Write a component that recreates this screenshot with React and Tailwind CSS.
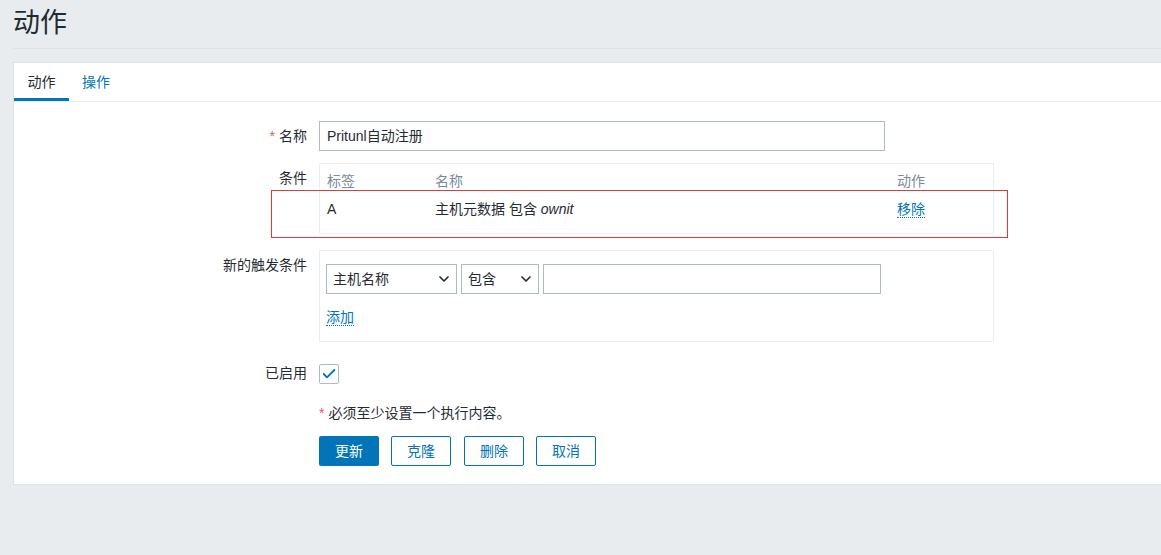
import { ChevronDown, Check } from 'lucide-react'

const font = { fontFamily: '"Liberation Sans", Arial, "Noto Sans CJK SC", sans-serif' }

function Row({ label, required, children, className = '', labelClass = 'pt-[5px]' }) {
  return (
    <div className={`grid grid-cols-[293px_1fr] gap-x-3 ${className}`}>
      <div className={`text-right text-[14px] text-[#1f2c33] ${labelClass}`}>
        {required && <span className="text-[#e45959] mr-1">*</span>}
        {label}
      </div>
      <div>{children}</div>
    </div>
  )
}

function Select({ value, width }) {
  return (
    <div className={`h-[30px] ${width} border border-[#acbbc4] bg-white flex items-center justify-between pl-[6px] pr-[4px] text-[14px] text-[#1f2c33]`}>
      <span>{value}</span>
      <ChevronDown size={16} strokeWidth={2.5} className="text-[#1f2c33]" />
    </div>
  )
}

export default function App() {
  return (
    <div className="relative w-full min-h-screen bg-[#e8ecef] overflow-hidden" style={font}>
      <div className="pl-[13px]">
        <div className="h-[49px] flex items-center border-b border-[#dce3e7]">
          <h1 className="text-[27px] text-[#1f2c33] leading-none -mt-[2px]">动作</h1>
        </div>

        <div className="mt-[13px] bg-white border border-[#dce3e7] border-r-0 h-[423px]">
          <div className="flex h-[39px] border-b border-[#ebeef0] text-[14px]">
            <div className="w-[55px] flex items-center justify-center text-[#1f2c33] border-b-[3px] border-[#0275b8] pt-[3px]">动作</div>
            <div className="px-[13px] flex items-center text-[#0275b8]">操作</div>
          </div>

          <div className="pt-[19px]">
            <Row label="名称" required>
              <div className="w-[566px] h-[30px] border border-[#acbbc4] flex items-center px-[7px] text-[14px] text-[#1f2c33]">
                Pritunl自动注册
              </div>
            </Row>

            <Row label="条件" className="mt-[12px]">
              <div className="w-[675px] h-[71px] border border-[#ebeef0] px-[7px] text-[14px]">
                <div className="grid grid-cols-[108px_462px_1fr] h-[33px] items-end pb-[5px] text-[#768d99]">
                  <span>标签</span>
                  <span>名称</span>
                  <span>动作</span>
                </div>
                <div className="grid grid-cols-[108px_462px_1fr] h-[24px] items-center text-[#1f2c33]">
                  <span>A</span>
                  <span>主机元数据 包含 <i>ownit</i></span>
                  <span><span className="text-[#0275b8] border-b border-dotted border-[#0275b8]">移除</span></span>
                </div>
              </div>
            </Row>

            <Row label="新的触发条件" className="mt-[16px]">
              <div className="w-[675px] h-[92px] border border-[#ebeef0] pl-[6px] pt-[13px]">
                <div className="flex gap-[4px]">
                  <Select value="主机名称" width="w-[131px]" />
                  <Select value="包含" width="w-[78px]" />
                  <div className="w-[338px] h-[30px] border border-[#acbbc4]"></div>
                </div>
                <div className="mt-[13px] text-[14px]">
                  <span className="text-[#0275b8] border-b border-dotted border-[#0275b8]">添加</span>
                </div>
              </div>
            </Row>

            <Row label="已启用" className="mt-[21px] items-center" labelClass="">
              <div className="w-[20px] h-[20px] border border-[#acbbc4] rounded-[2px] flex items-center justify-center">
                <Check size={16} strokeWidth={2.75} className="text-[#0275b8]" />
              </div>
            </Row>

            <div className="ml-[305px] mt-[19px] text-[14px] leading-[20px] text-[#1f2c33]">
              <span className="text-[#e45959] mr-1">*</span>必须至少设置一个执行内容。
            </div>

            <div className="ml-[305px] mt-[13px] flex gap-[12px] text-[14px]">
              <button className="w-[60px] h-[30px] rounded-[2px] bg-[#0275b8] text-white">更新</button>
              <button className="w-[60px] h-[30px] rounded-[2px] border border-[#0275b8] text-[#0275b8]">克隆</button>
              <button className="w-[60px] h-[30px] rounded-[2px] border border-[#0275b8] text-[#0275b8] ml-[1px]">删除</button>
              <button className="w-[60px] h-[30px] rounded-[2px] border border-[#0275b8] text-[#0275b8]">取消</button>
            </div>
          </div>
        </div>
      </div>

      <div className="absolute left-[271px] top-[190px] w-[737px] h-[48px] border border-[#e03a3a] pointer-events-none"></div>
    </div>
  )
}
